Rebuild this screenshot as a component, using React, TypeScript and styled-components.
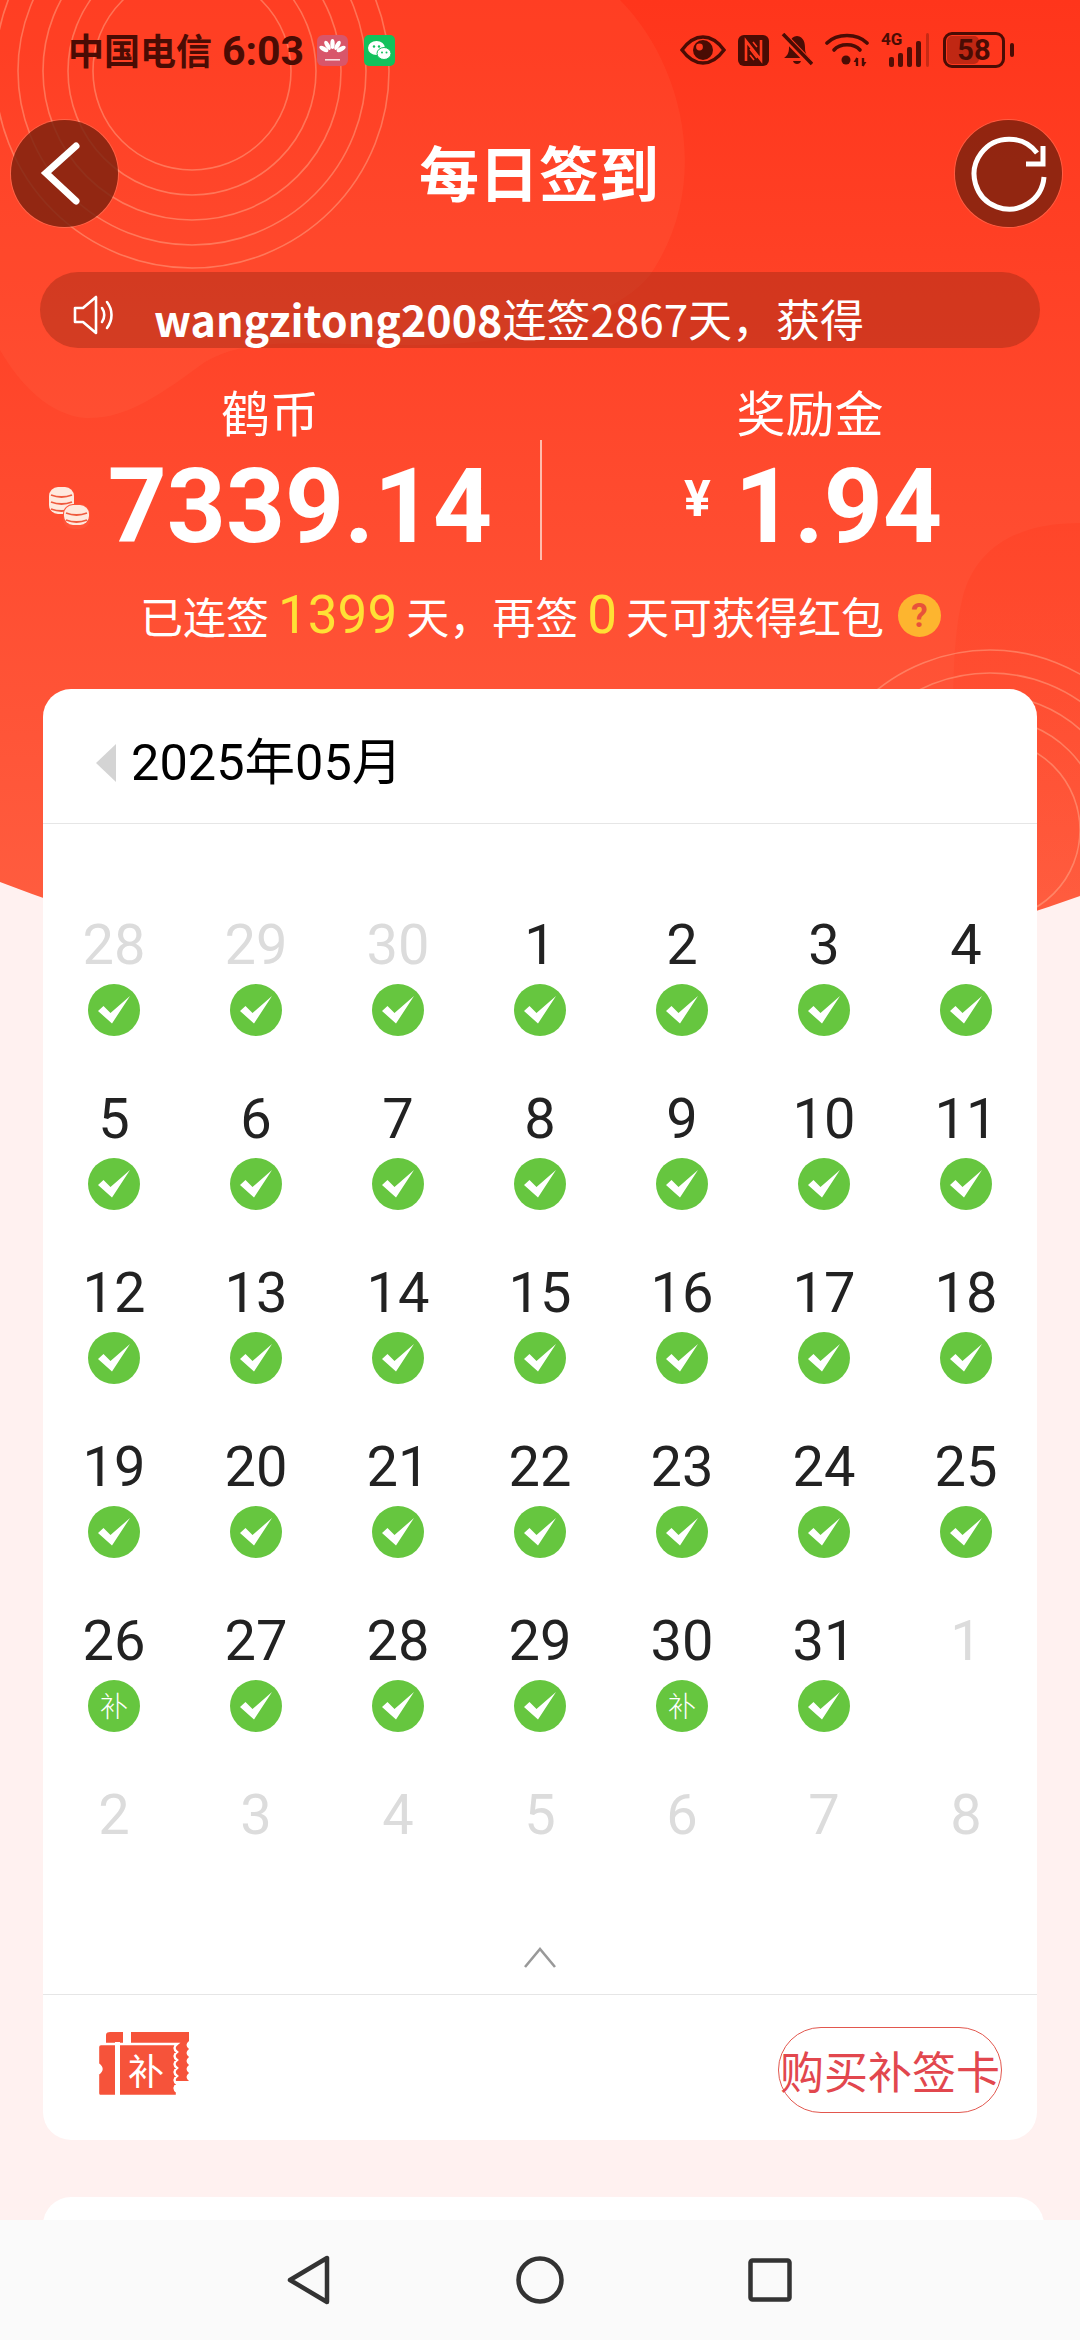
import React from 'react';
import styled, { createGlobalStyle } from 'styled-components';

const cjk = '"Noto Sans CJK SC", "Noto Sans", sans-serif';
const digits = 'Roboto, "Noto Sans CJK SC", sans-serif';
const statusInk = '#4a0c04';

const GlobalStyle = createGlobalStyle`
  html, body { margin: 0; padding: 0; background: #fff1f0; }
  * { box-sizing: border-box; }
`;

const Page = styled.div`
  position: relative;
  width: 1080px;
  height: 2340px;
  overflow: hidden;
  background: #fff1f0;
  font-family: ${cjk};
`;

const Backdrop = styled.svg`
  position: absolute;
  top: 0;
  left: 0;
  width: 1080px;
  height: 1000px;
`;

const Content = styled.div`
  position: relative;
  display: flex;
  flex-direction: column;
`;

const StatusBar = styled.div`
  display: flex;
  align-items: center;
  justify-content: space-between;
  height: 100px;
  padding: 0 75px 0 68px;
  color: ${statusInk};
`;

const StatusGroup = styled.div<{ $gap: number }>`
  display: flex;
  align-items: center;
  gap: ${(p) => p.$gap}px;
`;

const Carrier = styled.span`
  font-size: 36px;
  font-weight: 700;
  line-height: 44px;
  white-space: nowrap;
  margin-right: -3px;
`;

const Clock = styled.span`
  font-family: ${digits};
  font-size: 41px;
  font-weight: 700;
  margin-left: 10px;
`;

const Signal = styled.div`
  position: relative;
  width: 50px;
  height: 34px;
`;

const SignalLabel = styled.span`
  position: absolute;
  left: 0;
  top: -3px;
  font-family: ${digits};
  font-size: 17px;
  font-weight: 700;
  line-height: 18px;
`;

const Battery = styled.div`
  position: relative;
  width: 62px;
  height: 36px;
  border: 3px solid ${statusInk};
  border-radius: 9px;
  display: flex;
  align-items: center;
  justify-content: center;
  font-family: ${digits};
  font-size: 29px;
  font-weight: 700;
  &::after {
    content: '';
    position: absolute;
    right: -12px;
    top: 8px;
    width: 4px;
    height: 14px;
    border-radius: 2px;
    background: ${statusInk};
  }
`;

const BatteryFill = styled.div`
  position: absolute;
  left: 1px;
  top: 1px;
  bottom: 1px;
  width: 58%;
  border-radius: 5px;
  background: rgba(74, 12, 4, 0.35);
`;

const BatteryText = styled.span`
  position: relative;
`;

const NavRow = styled.div`
  display: flex;
  align-items: center;
  justify-content: space-between;
  margin-top: 19px;
  padding: 0 18px 0 11px;
  height: 108px;
`;

const RoundButton = styled.div`
  width: 107px;
  height: 107px;
  border-radius: 50%;
  background: rgba(122, 33, 14, 0.82);
  box-shadow: 0 0 0 1px rgba(255, 200, 170, 0.25);
  display: flex;
  align-items: center;
  justify-content: center;
`;

const Title = styled.h1`
  margin: 0 0 4px 5px;
  font-size: 60px;
  font-weight: 700;
  line-height: 80px;
  color: #fff;
`;

const Ticker = styled.div`
  display: flex;
  align-items: flex-start;
  height: 76px;
  margin: 45px 40px 0;
  padding: 15px 0 0 32px;
  border-radius: 38px;
  overflow: hidden;
  background: rgba(150, 40, 20, 0.42);
  color: #fff;
  font-size: 44px;
  line-height: 62px;
  white-space: nowrap;
`;

const TickerIcon = styled.svg`
  width: 44px;
  height: 44px;
  margin: 6px 38px 0 0;
  flex: none;
`;

const TickerName = styled.b`
  font-size: 43px;
  font-weight: 700;
`;

const Stats = styled.div`
  display: grid;
  grid-template-columns: 540px 540px;
  margin-top: 34px;
`;

const StatColumn = styled.div`
  display: flex;
  flex-direction: column;
  align-items: center;
`;

const StatLabel = styled.div`
  font-size: 49px;
  line-height: 58px;
  color: #fff;
`;

const StatValueRow = styled.div<{ $divider?: boolean }>`
  display: flex;
  align-items: center;
  justify-content: center;
  align-self: stretch;
  height: 120px;
  padding-top: 14px;
  ${(p) => (p.$divider ? 'border-left: 2px solid rgba(255, 225, 215, 0.75); padding-left: 4px;' : '')}
`;

const StatValue = styled.span`
  font-family: ${digits};
  font-size: 103px;
  font-weight: 700;
  line-height: 110px;
  color: #fff;
`;

const Yen = styled.span`
  font-family: ${digits};
  font-size: 50px;
  font-weight: 700;
  color: #fff;
  margin: 0 24px 16px 0;
`;

const CoinIcon = styled.svg`
  width: 42px;
  height: 44px;
  margin: 0 18px 0 0;
  flex: none;
`;

const Streak = styled.div`
  display: flex;
  align-items: center;
  justify-content: center;
  height: 50px;
  margin-top: 30px;
  padding-left: 1px;
  font-size: 43px;
  color: #fff;
  white-space: nowrap;
`;

const StreakNumber = styled.span`
  font-family: ${digits};
  font-size: 53px;
  font-weight: 400;
  color: #ffe135;
  margin: 0 9px;
`;

const Help = styled.span`
  width: 43px;
  height: 43px;
  margin-left: 14px;
  border-radius: 50%;
  background: #fdb52f;
  color: #e8523a;
  font-family: ${digits};
  font-size: 33px;
  font-weight: 700;
  line-height: 43px;
  text-align: center;
`;

const Card = styled.section`
  margin: 49px 43px 0;
  background: #fff;
  border-radius: 28px;
`;

const MonthHeader = styled.div`
  display: flex;
  align-items: center;
  height: 135px;
  padding: 14px 0 0 53px;
  border-bottom: 1px solid #e6e6e6;
`;

const PrevMonth = styled.div`
  width: 0;
  height: 0;
  border-style: solid;
  border-width: 19px 20px 19px 0;
  border-color: transparent #d4d4d4 transparent transparent;
  margin-right: 15px;
`;

const MonthText = styled.span`
  font-family: ${digits};
  font-size: 50.5px;
  line-height: 60px;
  color: #000;
`;

const DayGrid = styled.div`
  display: grid;
  grid-template-columns: repeat(7, 142px);
  row-gap: 54px;
  padding-top: 93px;
`;

const DayCell = styled.div`
  display: flex;
  flex-direction: column;
  align-items: center;
  gap: 11px;
  height: 120px;
`;

const DayNumber = styled.span<{ $muted?: boolean }>`
  font-family: ${digits};
  font-size: 56px;
  line-height: 56px;
  color: ${(p) => (p.$muted ? '#dcdcdc' : '#222')};
`;

const Mark = styled.div`
  width: 52px;
  height: 52px;
  border-radius: 50%;
  background: #66c63f;
  color: #fff;
  font-size: 28px;
  font-weight: 300;
  line-height: 50px;
  text-align: center;
`;

const CollapseRow = styled.div`
  display: flex;
  justify-content: center;
  height: 88px;
  padding-top: 38px;
  border-bottom: 1px solid #e6e6e6;
`;

const CardFooter = styled.div`
  display: flex;
  align-items: center;
  justify-content: space-between;
  height: 145px;
  padding: 4px 35px 0 54px;
`;

const TicketSlot = styled.div`
  margin-top: -6px;
`;

const BuyButton = styled.div`
  display: flex;
  align-items: center;
  justify-content: center;
  width: 224px;
  height: 86px;
  border: 1.5px solid #e2574e;
  border-radius: 43px;
  color: #e2474e;
  font-size: 44px;
  white-space: nowrap;
`;

const NextCard = styled.section`
  height: 120px;
  margin: 57px 36px 0 43px;
  background: #fff;
  border-radius: 28px;
`;

const SystemNav = styled.nav`
  position: absolute;
  left: 0;
  right: 0;
  bottom: 0;
  height: 120px;
  display: grid;
  grid-template-columns: 1fr 48px 1fr;
  align-items: center;
  background: #fafafa;
`;

const SystemSide = styled.div<{ $end?: boolean }>`
  display: flex;
  justify-content: ${(p) => (p.$end ? 'flex-start' : 'flex-end')};
  ${(p) => (p.$end ? 'padding-left: 184px;' : 'padding-right: 184px;')}
`;

type Day = { day: number; muted?: boolean; mark?: 'check' | 'patch' };

const days: Day[] = [
  { day: 28, muted: true, mark: 'check' },
  { day: 29, muted: true, mark: 'check' },
  { day: 30, muted: true, mark: 'check' },
  ...Array.from({ length: 31 }, (_, i): Day => ({
    day: i + 1,
    mark: i + 1 === 26 || i + 1 === 30 ? 'patch' : 'check',
  })),
  ...Array.from({ length: 8 }, (_, i): Day => ({ day: i + 1, muted: true })),
];

const skyPath = 'M0 0 H1080 V896 Q540 1090 0 882 Z';

const CheckGlyph = () => (
  <svg width="52" height="52" viewBox="0 0 52 52">
    <path d="M10 27 L15.5 22 L22.5 29 L42 12 L24 39.5 Z" fill="#fff" />
  </svg>
);

const Scenery = () => (
  <Backdrop viewBox="0 0 1080 1000">
    <defs>
      <linearGradient id="sky" x1="0" y1="0" x2="0" y2="1">
        <stop offset="0" stopColor="#ff351b" />
        <stop offset="1" stopColor="#ff6042" />
      </linearGradient>
      <linearGradient id="fold" x1="0" y1="0" x2="0" y2="1">
        <stop offset="0" stopColor="#ff3a1e" stopOpacity="0.35" />
        <stop offset="1" stopColor="#ff3a1e" stopOpacity="0" />
      </linearGradient>
      <clipPath id="skyClip">
        <path d={skyPath} />
      </clipPath>
    </defs>
    <path d={skyPath} fill="url(#sky)" />
    <path
      d="M620 0 C680 60 715 180 650 275 C610 325 500 345 420 345 C310 345 250 335 205 362 C160 395 125 420 85 418 C50 415 20 385 0 350 V0 Z"
      fill="#ff8a60"
      opacity="0.11"
    />
    <path d="M1080 523 C1020 523 975 545 962 600 C950 650 953 720 953 900 H1080 Z" fill="url(#fold)" />
    <g clipPath="url(#skyClip)" fill="none" stroke="#ffc9a8" strokeOpacity="0.38" strokeWidth="1.6">
      {[99, 124, 149, 174, 197].map((r) => (
        <circle key={r} cx="192" cy="71" r={r} />
      ))}
      {[90, 112, 135, 157, 180].map((r) => (
        <circle key={r} cx="990" cy="830" r={r} />
      ))}
    </g>
  </Backdrop>
);

const HuaweiTile = () => (
  <svg width="31" height="31" viewBox="0 0 31 31">
    <rect width="31" height="31" rx="6" fill="#d8566a" />
    {[-60, -30, 0, 30, 60].map((a) => (
      <ellipse key={a} cx="15.5" cy="9" rx="2.2" ry="5" fill="#fff" transform={`rotate(${a} 15.5 19)`} />
    ))}
    <rect x="8" y="24" width="15" height="1.6" fill="#fff" opacity="0.8" />
  </svg>
);

const WechatTile = () => (
  <svg width="31" height="31" viewBox="0 0 31 31">
    <rect width="31" height="31" rx="5" fill="#12c15c" />
    <ellipse cx="12.5" cy="13" rx="8.5" ry="7" fill="#fff" />
    <ellipse cx="20" cy="18.5" rx="7" ry="6" fill="#fff" stroke="#12c15c" strokeWidth="1" />
    <circle cx="10" cy="11.5" r="1.2" fill="#12c15c" />
    <circle cx="15" cy="11.5" r="1.2" fill="#12c15c" />
    <circle cx="18" cy="17.5" r="1" fill="#12c15c" />
    <circle cx="22.5" cy="17.5" r="1" fill="#12c15c" />
  </svg>
);

const EyeIcon = () => (
  <svg width="46" height="30" viewBox="0 0 46 30">
    <path d="M2 15 C10 4 17 2 23 2 C29 2 36 4 44 15 C36 26 29 28 23 28 C17 28 10 26 2 15 Z" fill="none" stroke={statusInk} strokeWidth="3.4" />
    <circle cx="23" cy="15" r="10" fill={statusInk} />
    <circle cx="19.5" cy="12" r="3.4" fill="#ff3a1e" />
  </svg>
);

const NfcIcon = () => (
  <svg width="31" height="31" viewBox="0 0 31 31">
    <rect width="31" height="31" rx="6" fill={statusInk} />
    <path d="M8 26 V6 L23 25 V5" fill="none" stroke="#ff3a1e" strokeWidth="2.6" />
    <path d="M12 14 L19 23 M12 20 L16 25 M15 7 L19 12" stroke="#ff3a1e" strokeWidth="1.6" />
  </svg>
);

const BellOffIcon = () => (
  <svg width="32" height="34" viewBox="0 0 32 34">
    <path d="M16 3 C9 4 8 10 8 15 C8 20 6 23 3 25 H29 C26 23 24 20 24 15 C24 10 23 4 16 3 Z" fill={statusInk} />
    <path d="M12 28 H20 C19 32 13 32 12 28 Z" fill={statusInk} />
    <path d="M2 2 L30 31" stroke="#ff3a1e" strokeWidth="7" />
    <path d="M2 1 L31 31" stroke={statusInk} strokeWidth="3.6" />
  </svg>
);

const WifiIcon = () => (
  <svg width="44" height="34" viewBox="0 0 44 34" fill="none" stroke={statusInk} strokeWidth="3.6" strokeLinecap="round">
    <path d="M2 10 C12 0 32 0 42 10" />
    <path d="M9 17 C15 10 29 10 35 17" />
    <circle cx="21" cy="27" r="4.5" fill={statusInk} stroke="none" />
    <path d="M32 25 V33 M38 25 V33" strokeWidth="2.4" strokeLinecap="butt" />
    <path d="M32 24 L28.5 29 H32 Z M38 34 L41.5 29 H38 Z" fill={statusInk} stroke="none" />
  </svg>
);

const SignalBars = () => (
  <svg width="50" height="34" viewBox="0 0 50 34" style={{ position: 'absolute', left: 0, top: 0 }}>
    {[
      [8, 24, 10, 0.95],
      [17, 20, 14, 0.95],
      [26, 14, 20, 0.95],
      [35, 8, 26, 0.95],
      [45, 0, 34, 0.3],
    ].map(([x, y, h, o]) => (
      <rect key={x} x={x} y={y} width={x === 45 ? 3 : 5} height={h} rx="2" fill={statusInk} opacity={o} />
    ))}
  </svg>
);

const Coins = () => {
  const stack = (x: number, y: number, rows: number, key: string) => (
    <g key={key}>
      <rect x={x} y={y} width="25" height={rows * 7 + 6} rx="9" fill="#ffe9de" />
      {Array.from({ length: rows }, (_, i) => (
        <path
          key={i}
          d={`M${x + 2} ${y + 8 + i * 7} Q${x + 12.5} ${y + 12 + i * 7} ${x + 23} ${y + 8 + i * 7}`}
          fill="none"
          stroke="#ef5a3e"
          strokeWidth="1.8"
        />
      ))}
    </g>
  );
  return (
    <CoinIcon viewBox="0 0 42 44">
      {stack(1, 2, 3, 'big')}
      <rect x="15" y="19" width="27" height="25" rx="10" fill="#ff5438" />
      {stack(16, 20, 2, 'small')}
    </CoinIcon>
  );
};

const TicketIcon = () => (
  <svg width="92" height="66" viewBox="0 0 92 66">
    <path
      d={`M9 4 Q9 1 13 1 H92 q4 5 0 9 ${'q-5 4 0 8 '.repeat(5)} H70 V13 H9 Z`}
      fill="#f6533a"
    />
    <path
      d={`M4 13 H80 q-5 4 0 8 ${'q-5 4 0 8 '.repeat(5)} V65 H4 Q1 65 1 62 V43 Q8 38 1 33 V16 Q1 13 4 13 Z`}
      fill="#f6533a"
      stroke="#fff"
      strokeWidth="2.4"
    />
    <rect x="18" y="11" width="5" height="55" fill="#fff" />
    <rect x="26" y="0" width="8" height="13" fill="#fff" />
    <text x="49" y="54" textAnchor="middle" fontSize="36" fill="#fff" fontFamily={cjk}>
      补
    </text>
  </svg>
);

export default function App() {
  return (
    <Page>
      <GlobalStyle />
      <Scenery />
      <Content>
        <StatusBar>
          <StatusGroup $gap={16}>
            <Carrier>
              中国电信<Clock>6:03</Clock>
            </Carrier>
            <HuaweiTile />
            <WechatTile />
          </StatusGroup>
          <StatusGroup $gap={12}>
            <EyeIcon />
            <NfcIcon />
            <BellOffIcon />
            <WifiIcon />
            <Signal>
              <SignalBars />
              <SignalLabel>4G</SignalLabel>
            </Signal>
            <Battery>
              <BatteryFill />
              <BatteryText>58</BatteryText>
            </Battery>
          </StatusGroup>
        </StatusBar>

        <NavRow>
          <RoundButton>
            <svg width="107" height="107" viewBox="0 0 107 107">
              <path d="M65 26 L35 53 L65 81" fill="none" stroke="#fff" strokeWidth="7" strokeLinecap="round" strokeLinejoin="miter" />
            </svg>
          </RoundButton>
          <Title>每日签到</Title>
          <RoundButton>
            <svg width="107" height="107" viewBox="0 0 107 107" fill="none" stroke="#fff" strokeWidth="5">
              <path d="M89 57 A35 35 0 1 1 82 33" />
              <path d="M88 26 V44 H71" />
            </svg>
          </RoundButton>
        </NavRow>

        <Ticker>
          <TickerIcon viewBox="0 0 44 44" fill="none" stroke="#fff" strokeWidth="2.6" strokeLinejoin="round" strokeLinecap="round">
            <path d="M3 15 H11 L24 4 V40 L11 29 H3 Z" />
            <path d="M30 15 C33 19 33 25 30 29" />
            <path d="M35 9 C41 17 41 27 35 35" />
          </TickerIcon>
          <span>
            <TickerName>wangzitong2008</TickerName>连签2867天，获得
          </span>
        </Ticker>

        <Stats>
          <StatColumn>
            <StatLabel>鹤币</StatLabel>
            <StatValueRow>
              <Coins />
              <StatValue>7339.14</StatValue>
            </StatValueRow>
          </StatColumn>
          <StatColumn>
            <StatLabel>奖励金</StatLabel>
            <StatValueRow $divider>
              <Yen>¥</Yen>
              <StatValue>1.94</StatValue>
            </StatValueRow>
          </StatColumn>
        </Stats>

        <Streak>
          已连签<StreakNumber>1399</StreakNumber>天，再签<StreakNumber>0</StreakNumber>天可获得红包
          <Help>?</Help>
        </Streak>

        <Card>
          <MonthHeader>
            <PrevMonth />
            <MonthText>2025年05月</MonthText>
          </MonthHeader>
          <DayGrid>
            {days.map((d, i) => (
              <DayCell key={i}>
                <DayNumber $muted={d.muted}>{d.day}</DayNumber>
                {d.mark && <Mark>{d.mark === 'check' ? <CheckGlyph /> : '补'}</Mark>}
              </DayCell>
            ))}
          </DayGrid>
          <CollapseRow>
            <svg width="34" height="24" viewBox="0 0 34 24">
              <path d="M2 22 L17 4 L32 22" fill="none" stroke="#999" strokeWidth="2.6" />
            </svg>
          </CollapseRow>
          <CardFooter>
            <TicketSlot>
              <TicketIcon />
            </TicketSlot>
            <BuyButton>购买补签卡</BuyButton>
          </CardFooter>
        </Card>

        <NextCard />
      </Content>

      <SystemNav>
        <SystemSide>
          <svg width="46" height="50" viewBox="0 0 46 50">
            <path d="M41 3 V47 L4 25 Z" fill="none" stroke="#333" strokeWidth="4.5" strokeLinejoin="round" />
          </svg>
        </SystemSide>
        <svg width="48" height="48" viewBox="0 0 48 48">
          <circle cx="24" cy="24" r="21.5" fill="none" stroke="#333" strokeWidth="4.5" />
        </svg>
        <SystemSide $end>
          <svg width="44" height="44" viewBox="0 0 44 44">
            <rect x="2.5" y="2.5" width="39" height="39" rx="2" fill="none" stroke="#333" strokeWidth="4.5" />
          </svg>
        </SystemSide>
      </SystemNav>
    </Page>
  );
}
